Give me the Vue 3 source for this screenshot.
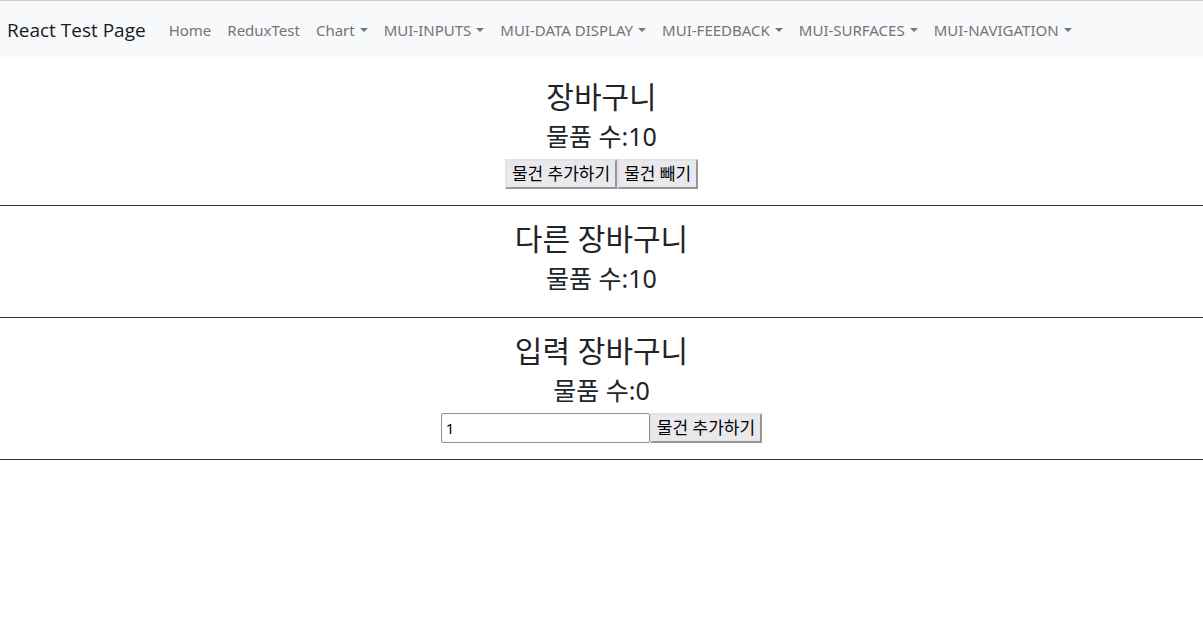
<script setup>
import { ref } from 'vue'

const links = ['Home', 'ReduxTest']
const menus = ['Chart', 'MUI-INPUTS', 'MUI-DATA DISPLAY', 'MUI-FEEDBACK', 'MUI-SURFACES', 'MUI-NAVIGATION']

const count = ref(10)
const inputCount = ref(0)
const amount = ref('1')
</script>

<template>
  <nav class="navbar">
    <a class="brand" href="#">React Test Page</a>
    <a v-for="l in links" :key="l" class="link" href="#">{{ l }}</a>
    <button v-for="m in menus" :key="m" class="link menu" type="button" aria-haspopup="true">{{ m }}</button>
  </nav>
  <main class="page">
    <section class="cart">
      <h1>장바구니</h1>
      <h2>물품 수:{{ count }}</h2>
      <div class="controls">
        <button class="btn" type="button" @click="count++">물건 추가하기</button>
        <button class="btn" type="button" @click="count--">물건 빼기</button>
      </div>
    </section>
    <section class="cart">
      <h1>다른 장바구니</h1>
      <h2>물품 수:{{ count }}</h2>
    </section>
    <section class="cart">
      <h1>입력 장바구니</h1>
      <h2>물품 수:{{ inputCount }}</h2>
      <div class="controls">
        <input v-model="amount" class="amount" type="text" aria-label="물품 수" />
        <button class="btn" type="button" @click="inputCount += Number(amount)">물건 추가하기</button>
      </div>
    </section>
  </main>
</template>

<style>
body {
  margin: 0;
  background: #fff;
  color: #212529;
  font-family: "Noto Sans", "Noto Sans CJK KR", sans-serif;
}
</style>

<style scoped>
.navbar {
  display: flex;
  align-items: center;
  box-sizing: border-box;
  min-height: 57px;
  padding: 2px 0 0 7px;
  border-top: 1px solid #c8c9cc;
  background: #f8f9fb;
  white-space: nowrap;
}
.brand {
  margin-right: 15px;
  color: #1a1a1a;
  font-family: "Open Sans", sans-serif;
  font-size: 19px;
  line-height: 30px;
  text-decoration: none;
}
.link {
  padding: 8px;
  border: 0;
  background: none;
  color: #737475;
  font-family: inherit;
  font-size: 15px;
  line-height: 24px;
  text-decoration: none;
}
.menu::after {
  content: "";
  display: inline-block;
  margin-left: 5px;
  vertical-align: 4px;
  border-top: 4px solid;
  border-right: 4px solid transparent;
  border-left: 4px solid transparent;
}
.page {
  padding-top: 7px;
}
.cart {
  padding: 16px 0;
  border-bottom: 1px solid #333539;
  text-align: center;
}
h1,
h2 {
  margin: 0 0 8px;
  font-weight: 400;
}
h1 {
  font-size: 30px;
  line-height: 34px;
}
h2 {
  font-size: 25px;
  line-height: 29px;
}
.controls {
  display: flex;
  justify-content: center;
}
.btn,
.amount {
  box-sizing: border-box;
  height: 30px;
  margin: 0;
  color: #000;
  font-family: inherit;
}
.btn {
  padding: 0 5px;
  border: 2px solid;
  border-color: #e3e3e3 #979797 #979797 #e3e3e3;
  background: #e9e9ed;
  font-size: 17px;
  line-height: 26px;
}
.amount {
  width: 209px;
  padding: 0 4px;
  border: 1px solid #8f8f9d;
  border-radius: 2px;
  background: #fff;
  font-size: 15px;
}
</style>
